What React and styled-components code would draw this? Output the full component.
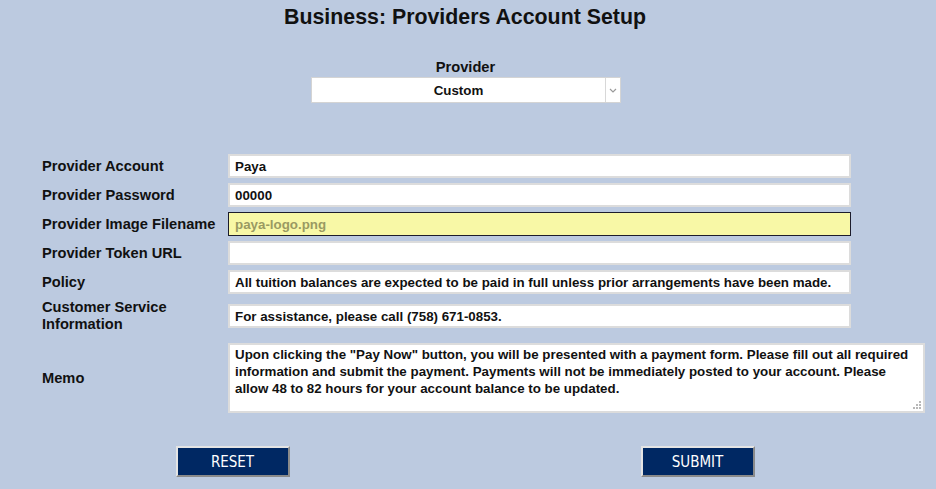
import React from "react";
import styled, { createGlobalStyle } from "styled-components";

const Global = createGlobalStyle`
  html, body { margin: 0; padding: 0; }
  body {
    background: #bccae0;
    font-family: "Liberation Sans", Arial, sans-serif;
    color: #111;
  }
`;

const Page = styled.div`
  width: 930px;
`;

const Title = styled.h1`
  margin: 0;
  padding-top: 5px;
  font-size: 21.33px;
  line-height: 24px;
  font-weight: bold;
  text-align: center;
  color: #111;
`;

const ProviderBlock = styled.div`
  margin-top: 30px;
  display: flex;
  flex-direction: column;
  align-items: center;
  gap: 1px;
`;

const SmallLabel = styled.div`
  font-size: 14.67px;
  font-weight: bold;
  line-height: 17px;
  padding-left: 1px;
`;

const SelectBox = styled.div`
  width: 310px;
  height: 26px;
  box-sizing: border-box;
  margin-left: 2px;
  background: #fff;
  border: 1px solid #d4d4d4;
  display: flex;
  align-items: stretch;
  font-size: 13.33px;
  font-weight: bold;
`;

const SelectValue = styled.div`
  flex: 1;
  display: flex;
  align-items: center;
  justify-content: center;
`;

const SelectArrow = styled.div`
  width: 14px;
  border-left: 1px solid #d8d8d8;
  display: flex;
  align-items: center;
  justify-content: center;
`;

const Form = styled.div`
  margin-top: 51px;
  padding-left: 42px;
  display: grid;
  grid-template-columns: 186px 697px;
  row-gap: 5px;
  align-items: center;
`;

const Label = styled.div`
  font-size: 14.67px;
  font-weight: bold;
  line-height: 17px;
  color: #111;
  padding-right: 8px;
`;

const Field = styled.input`
  width: 623px;
  height: 24px;
  box-sizing: border-box;
  margin: 0;
  font-family: "Liberation Sans", Arial, sans-serif;
  font-size: 13.33px;
  font-weight: bold;
  color: ${(p) => (p.$active ? "#9a9a62" : "#111")};
  background: ${(p) => (p.$active ? "#f8f8a6" : "#fff")};
  border: ${(p) => (p.$active ? "1px solid #1c1c2c" : "2px solid #dcdcdc")};
  padding: 0 ${(p) => (p.$active ? "6px" : "5px")};
  outline: none;
`;

const MemoLabel = styled(Label)`
  margin-top: 5px;
`;

const MemoWrap = styled.div`
  position: relative;
  margin-top: 5px;
  width: 697px;
  height: 70px;
`;

const Memo = styled.textarea`
  display: block;
  margin: 0;
  width: 100%;
  height: 100%;
  box-sizing: border-box;
  padding: 1px 5px;
  font-family: "Liberation Sans", Arial, sans-serif;
  font-size: 13.33px;
  font-weight: bold;
  line-height: 17px;
  color: #111;
  background: #fff;
  border: 2px solid #dcdcdc;
  outline: none;
  resize: none;
`;

const Grip = styled.svg`
  position: absolute;
  right: 4px;
  bottom: 4px;
  pointer-events: none;
`;

const Buttons = styled.div`
  margin-top: 33px;
  display: grid;
  grid-template-columns: 1fr 1fr;
  justify-items: center;
`;

const Button = styled.button`
  width: 114px;
  height: 31px;
  box-sizing: border-box;
  background: #002863;
  color: #fff;
  border: 2px solid;
  border-color: #e4e4e4 #8a8a8a #8a8a8a #e4e4e4;
  font-family: "Liberation Sans Narrow", "DejaVu Sans Condensed", "Liberation Sans", Arial, sans-serif;
  font-size: 15px;
  padding: 0;
  cursor: pointer;
`;

const rows = [
  ["Provider Account", "Paya"],
  ["Provider Password", "00000"],
  ["Provider Image Filename", "paya-logo.png", true],
  ["Provider Token URL", ""],
  ["Policy", "All tuition balances are expected to be paid in full unless prior arrangements have been made."],
  ["Customer Service Information", "For assistance, please call (758) 671-0853."],
];

const memo =
  'Upon clicking the "Pay Now" button, you will be presented with a payment form. Please fill out all required information and submit the payment. Payments will not be immediately posted to your account. Please allow 48 to 82 hours for your account balance to be updated.';

export default function App() {
  return (
    <Page>
      <Global />
      <Title>Business: Providers Account Setup</Title>
      <ProviderBlock>
        <SmallLabel>Provider</SmallLabel>
        <SelectBox>
          <SelectValue>Custom</SelectValue>
          <SelectArrow>
            <svg width="8" height="5" viewBox="0 0 8 5">
              <path d="M1 1 L4 4 L7 1" fill="none" stroke="#9a9a9a" strokeWidth="1.2" />
            </svg>
          </SelectArrow>
        </SelectBox>
      </ProviderBlock>
      <Form>
        {rows.map(([label, value, active]) => (
          <React.Fragment key={label}>
            <Label>{label}</Label>
            <Field $active={active} defaultValue={value} readOnly />
          </React.Fragment>
        ))}
        <MemoLabel>Memo</MemoLabel>
        <MemoWrap>
          <Memo defaultValue={memo} readOnly />
          <Grip width="8" height="8" viewBox="0 0 8 8">
            <g fill="#b8b8b8">
              <rect x="6" y="0" width="2" height="2" />
              <rect x="3" y="3" width="2" height="2" />
              <rect x="6" y="3" width="2" height="2" />
              <rect x="0" y="6" width="2" height="2" />
              <rect x="3" y="6" width="2" height="2" />
              <rect x="6" y="6" width="2" height="2" />
            </g>
          </Grip>
        </MemoWrap>
      </Form>
      <Buttons>
        <Button>RESET</Button>
        <Button>SUBMIT</Button>
      </Buttons>
    </Page>
  );
}
